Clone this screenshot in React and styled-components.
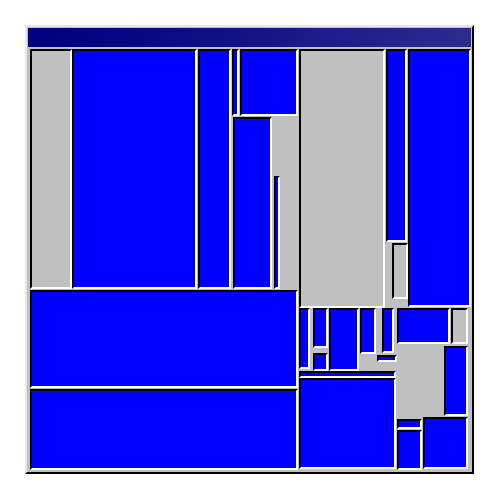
import React from "react";
import styled, { createGlobalStyle } from "styled-components";

const GlobalStyle = createGlobalStyle`
  html, body {
    margin: 0;
    padding: 0;
    background: #ffffff;
    font-family: "Liberation Sans", Arial, sans-serif;
  }
`;

// page coordinates of the treemap canvas origin
const OX = 28;
const OY = 47;

// [x1, y1, x2, y2, kind] in page pixels
const tiles = [
  [30, 49, 71, 288, "gray"],
  [72, 49, 196, 288, "blue"],
  [198, 49, 230, 288, "blue"],
  [232, 49, 238, 115, "blue"],
  [240, 49, 297, 115, "blue"],
  [233, 117, 271, 288, "blue"],
  [274, 176, 279, 288, "blue"],
  [299, 49, 384, 307, "gray"],
  [386, 49, 406, 241, "blue"],
  [392, 243, 407, 298, "gray"],
  [408, 49, 470, 306, "blue"],
  [30, 290, 297, 387, "blue"],
  [30, 389, 297, 469, "blue"],
  [299, 308, 309, 368, "blue"],
  [313, 308, 327, 347, "blue"],
  [313, 353, 327, 370, "blue"],
  [329, 308, 358, 370, "blue"],
  [360, 308, 375, 353, "blue"],
  [382, 308, 393, 352, "blue"],
  [377, 355, 396, 361, "blue"],
  [299, 371, 395, 377, "blue"],
  [299, 378, 395, 468, "blue"],
  [397, 308, 449, 343, "blue"],
  [451, 308, 467, 343, "gray"],
  [444, 346, 467, 415, "blue"],
  [397, 419, 421, 428, "blue"],
  [397, 430, 421, 469, "blue"],
  [423, 417, 467, 468, "blue"],
];

const Window = styled.div`
  box-sizing: border-box;
  margin: 25px 0 0 25px;
  width: 449px;
  height: 449px;
  padding: 1px;
  background: #c0c0c0;
  border-style: solid;
  border-width: 2px;
  border-color: #e8e8e8 #000000 #000000 #e8e8e8;
  display: flex;
  flex-direction: column;
`;

const TitleBar = styled.div`
  height: 19px;
  flex: none;
  background: linear-gradient(to right, #000080 0%, #0a0a84 30%, #2c2c8e 100%);
`;

const Canvas = styled.div`
  position: relative;
  flex: 1;
  background: #c0c0c0;
`;

const Tile = styled.div`
  position: absolute;
  box-sizing: border-box;
  border-style: solid;
  border-width: 2px;
  border-color: #000000 #ffffff #ffffff #000000;
  background: ${(p) => (p.$kind === "blue" ? "#0000ff" : "#c0c0c0")};
`;

export default function App() {
  return (
    <>
      <GlobalStyle />
      <Window>
        <TitleBar />
        <Canvas>
          {tiles.map(([x1, y1, x2, y2, kind], i) => (
            <Tile
              key={i}
              $kind={kind}
              style={{
                left: x1 - OX,
                top: y1 - OY,
                width: x2 - x1 + 1,
                height: y2 - y1 + 1,
              }}
            />
          ))}
        </Canvas>
      </Window>
    </>
  );
}
